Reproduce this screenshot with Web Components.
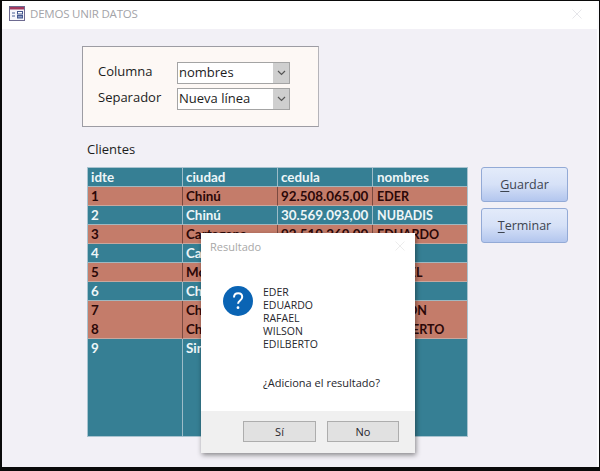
<!DOCTYPE html>
<html lang="es">
<head>
<meta charset="utf-8">
<title>DEMOS UNIR DATOS</title>
<style>
  html, body { margin: 0; padding: 0; background: #000; }
</style>
</head>
<body>
<app-window>
  <title-bar slot="title">DEMOS UNIR DATOS</title-bar>
  <filter-panel>
    <combo-box label="Columna" value="nombres"></combo-box>
    <combo-box label="Separador" value="Nueva línea"></combo-box>
  </filter-panel>
  <data-grid caption="Clientes"></data-grid>
  <div slot="actions">
    <action-button key="G" rest="uardar"></action-button>
    <action-button key="T" rest="erminar"></action-button>
  </div>
  <msg-dialog slot="overlay" heading="Resultado" question="¿Adiciona el resultado?">
    EDER<br>EDUARDO<br>RAFAEL<br>WILSON<br>EDILBERTO
  </msg-dialog>
</app-window>

<script>
class AppWindow extends HTMLElement {
  constructor() {
    super();
    this.attachShadow({ mode: 'open' }).innerHTML = `
    <style>
      :host {
        display: flex;
        flex-direction: column;
        position: relative;
        width: 600px;
        height: 471px;
        box-sizing: border-box;
        padding: 1px 1px 4px 2px;
        background: #0a0a0a;
        overflow: hidden;
      }
      .inner {
        flex: 1;
        display: flex;
        flex-direction: column;
        background: #f2f0f6;
        border-right: 2px solid #fbfbfd;
      }
      .content {
        flex: 1;
        padding: 17px 0 0 80px;
      }
      .row {
        display: flex;
        gap: 13px;
        align-items: flex-start;
      }
      ::slotted([slot=actions]) {
        display: flex;
        flex-direction: column;
        gap: 6px;
        margin-top: 26px;
      }
    </style>
    <div class="inner">
      <slot name="title"></slot>
      <div class="content">
        <slot name="panel"></slot>
        <div class="row">
          <slot></slot>
          <slot name="actions"></slot>
        </div>
      </div>
    </div>
    <slot name="overlay"></slot>`;
  }
}

class TitleBar extends HTMLElement {
  constructor() {
    super();
    this.attachShadow({ mode: 'open' }).innerHTML = `
    <style>
      :host {
        display: flex;
        align-items: center;
        gap: 5px;
        box-sizing: border-box;
        height: 28px;
        padding: 0 15px 3px 7px;
        background: #fff;
        color: #a3a3a8;
        font: 11.5px "Open Sans", sans-serif;
      }
      .text { flex: 1; letter-spacing: -0.2px; }
      svg { display: block; }
    </style>
    <svg width="16" height="15" viewBox="0 0 16 15">
      <rect x="0.5" y="0.5" width="15" height="14" fill="#f7f6fb" stroke="#6d6a90"/>
      <rect x="1" y="1" width="14" height="2.5" fill="#a3385e"/>
      <path d="M3 7h3M3 10h3" stroke="#4b5f94" stroke-width="1.2"/>
      <rect x="8.5" y="5.5" width="5" height="2.5" fill="#fff" stroke="#45588f"/>
      <rect x="8.5" y="9.5" width="5" height="2.5" fill="#8b9ac4" stroke="#45588f"/>
    </svg>
    <span class="text"><slot></slot></span>
    <svg width="10" height="10" viewBox="0 0 10 10"><path d="M0.5 0.5l9 9M9.5 0.5l-9 9" stroke="#e6e6ea"/></svg>`;
  }
}

class FilterPanel extends HTMLElement {
  constructor() {
    super();
    this.attachShadow({ mode: 'open' }).innerHTML = `
    <style>
      :host {
        display: flex;
        flex-direction: column;
        gap: 4px;
        box-sizing: border-box;
        width: 237px;
        height: 81px;
        margin-bottom: 14px;
        padding: 15px 0 0 15px;
        background: #fdf8f5;
        border: 1px solid #9d9ca3;
        border-right-color: #b5b4ba;
      }
    </style>
    <slot></slot>`;
    this.slot = 'panel';
  }
}

class ComboBox extends HTMLElement {
  constructor() {
    super();
    this.attachShadow({ mode: 'open' }).innerHTML = `
    <style>
      :host {
        display: flex;
        align-items: center;
        height: 22px;
        color: #1c1c1c;
        font: 13px "Open Sans", sans-serif;
      }
      .label { width: 79px; margin-bottom: 4px; }
      .box {
        display: flex;
        width: 113px;
        height: 22px;
        box-sizing: border-box;
        background: #fff;
        border: 1px solid #a4a4a4;
      }
      .value { flex: 1; padding: 0 1px; line-height: 19px; white-space: nowrap; }
      .arrow {
        width: 16px;
        background: #cfcfcf;
        display: flex;
        align-items: center;
        justify-content: center;
      }
    </style>
    <span class="label"></span>
    <div class="box">
      <span class="value"></span>
      <span class="arrow">
        <svg width="9" height="6" viewBox="0 0 9 6"><path d="M1 1l3.500 3.500L8 1" fill="none" stroke="#555" stroke-width="1.200"/></svg>
      </span>
    </div>`;
    this.shadowRoot.querySelector('.label').textContent = this.getAttribute('label');
    this.shadowRoot.querySelector('.value').textContent = this.getAttribute('value');
  }
}

const clientes = [
  ['1', 'Chinú', '92.508.065,00', 'EDER'],
  ['2', 'Chinú', '30.569.093,00', 'NUBADIS'],
  ['3', 'Cartagena', '92.519.269,00', 'EDUARDO'],
  ['4', 'Ca', '', ''],
  ['5', 'Mo', '', 'RAFAEL'],
  ['6', 'Ch', '', ''],
  ['7', 'Ch', '', 'WILSON'],
  ['8', 'Ch', '', 'EDILBERTO'],
  ['9', 'Sin', '', '']
];
const tonos = ['tan', 'teal', 'tan', 'teal', 'tan', 'teal', 'tan', 'tan', 'teal'];

class DataGrid extends HTMLElement {
  constructor() {
    super();
    this.attachShadow({ mode: 'open' }).innerHTML = `
    <style>
      :host {
        display: block;
        width: 386px;
        padding-left: 5px;
        box-sizing: border-box;
        font: 700 13.4px Lato, sans-serif;
      }
      .caption {
        height: 26px;
        font: 400 13px/17px "Open Sans", sans-serif;
        color: #1c1c1c;
      }
      .grid {
        display: grid;
        grid-template-columns: 95px 95px 95px 94px;
        grid-template-rows: repeat(9, 19px) 97px;
        border: 1px solid #a9c3cf;
        background: #367f94;
      }
      .cell {
        box-sizing: border-box;
        padding: 0 3px;
        line-height: 18px;
        white-space: nowrap;
        overflow: hidden;
        border-right: 1px solid #9dbcc8;
        border-bottom: 1px solid #a0b8c0;
      }
      .cell:nth-child(4n) { border-right: 0; padding-left: 4px; }
      .cell.name { font-size: 12.5px; padding-top: 1px; }
      .teal { background: #367f94; color: #eef6f8; }
      .tan { background: #c47c6a; color: #2b0808; border-right-color: #7a4a40; border-bottom-color: #c9a79e; }
      .last { border-bottom: 0; }
      .same { border-bottom: 0; }
    </style>
    <div class="caption"></div>
    <div class="grid"></div>`;
    this.shadowRoot.querySelector('.caption').textContent = this.getAttribute('caption');
    const grid = this.shadowRoot.querySelector('.grid');
    this.addRow(grid, ['idte', 'ciudad', 'cedula', 'nombres'], 'teal', false);
    for (let i = 0; i < clientes.length; i += 1) {
      let extra = '';
      if (i === clientes.length - 1) extra = ' last';
      if (i === 6) extra = ' same';
      this.addRow(grid, clientes[i], tonos[i] + extra, true);
    }
  }

  addRow(grid, values, cls, isData) {
    for (let i = 0; i < values.length; i += 1) {
      const cell = document.createElement('div');
      cell.className = 'cell ' + cls;
      if (isData && i === 3) cell.className += ' name';
      cell.textContent = values[i];
      grid.appendChild(cell);
    }
  }
}

class ActionButton extends HTMLElement {
  constructor() {
    super();
    this.attachShadow({ mode: 'open' }).innerHTML = `
    <style>
      :host {
        display: flex;
        align-items: center;
        justify-content: center;
        box-sizing: border-box;
        width: 87px;
        height: 35px;
        border: 1px solid #93aad6;
        border-radius: 3px;
        background: linear-gradient(#e3ebfa, #d6e1f7 50%, #b3c6ee);
        color: #3c4450;
        font: 12.5px "Open Sans", sans-serif;
      }
      u { text-underline-offset: 2px; }
    </style>
    <span><u></u><span class="rest"></span></span>`;
    this.shadowRoot.querySelector('u').textContent = this.getAttribute('key');
    this.shadowRoot.querySelector('.rest').textContent = this.getAttribute('rest');
  }
}

class MsgDialog extends HTMLElement {
  constructor() {
    super();
    this.attachShadow({ mode: 'open' }).innerHTML = `
    <style>
      :host {
        position: absolute;
        left: 201px;
        top: 233px;
        width: 214px;
        height: 220px;
        display: flex;
        flex-direction: column;
        background: #fff;
        box-shadow: 1px 2px 5px rgba(0,0,0,.45);
        font: 10.5px/13px "Open Sans", sans-serif;
        color: #26262c;
      }
      .head {
        display: flex;
        justify-content: space-between;
        align-items: center;
        box-sizing: border-box;
        height: 28px;
        padding: 0 10px 2px 9px;
        color: #a8a8a8;
        font-size: 11px;
      }
      .body {
        flex: 1;
        padding: 25px 0 0 22px;
      }
      .msg { display: flex; gap: 10px; }
      .icon { display: block; }
      .q { margin: 25px 0 0 40px; font-size: 11px; }
      .foot {
        display: flex;
        gap: 11px;
        justify-content: flex-end;
        align-items: flex-start;
        box-sizing: border-box;
        height: 42px;
        padding: 10px 16px 0 0;
        background: #f0f0f0;
      }
      .btn {
        box-sizing: border-box;
        width: 73px;
        height: 21px;
        line-height: 19px;
        text-align: center;
        background: #e1e1e1;
        border: 1px solid #adadad;
        font-size: 11px;
      }
      .btn:last-child { width: 72px; }
    </style>
    <div class="head">
      <span class="title"></span>
      <svg width="10" height="10" viewBox="0 0 10 10"><path d="M0.500 0.500l9 9M9.500 0.500l-9 9" stroke="#ececec"/></svg>
    </div>
    <div class="body">
      <div class="msg">
        <svg class="icon" width="30" height="30" viewBox="0 0 30 30">
          <circle cx="15" cy="15" r="15" fill="#0a64b4"/>
          <path d="M11 11.500c0-2.700 1.800-4.300 4.200-4.300s4 1.500 4 3.800c0 1.800-1 2.700-2.300 3.700-1.200.9-1.800 1.600-1.800 3.100" fill="none" stroke="#fff" stroke-width="2"/>
          <circle cx="15" cy="21.700" r="1.400" fill="#fff"/>
        </svg>
        <div><slot></slot></div>
      </div>
      <div class="q"></div>
    </div>
    <div class="foot">
      <div class="btn">Sí</div>
      <div class="btn">No</div>
    </div>`;
    this.shadowRoot.querySelector('.title').textContent = this.getAttribute('heading');
    this.shadowRoot.querySelector('.q').textContent = this.getAttribute('question');
  }
}

customElements.define('app-window', AppWindow);
customElements.define('title-bar', TitleBar);
customElements.define('filter-panel', FilterPanel);
customElements.define('combo-box', ComboBox);
customElements.define('data-grid', DataGrid);
customElements.define('action-button', ActionButton);
customElements.define('msg-dialog', MsgDialog);
</script>
</body>
</html>
